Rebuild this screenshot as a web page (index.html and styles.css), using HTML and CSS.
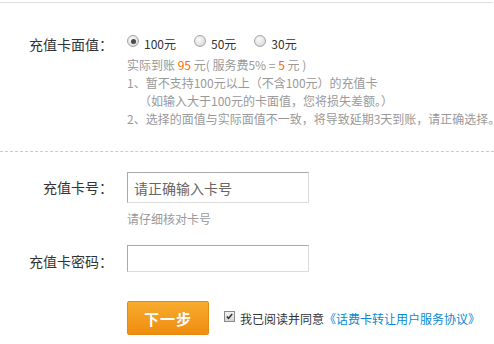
FILE: index.html
```html
<!DOCTYPE html>
<html lang="zh-CN">
<head>
<meta charset="utf-8">
<title>充值卡</title>
<link rel="stylesheet" href="styles.css">
</head>
<body>
<div class="topline"></div>
<section class="amount">
  <div class="row">
    <div class="label">充值卡面值：</div>
    <div class="content">
      <div class="radios">
        <label class="radio-item"><span class="radio checked"></span><span class="radio-text">100元</span></label>
        <label class="radio-item"><span class="radio"></span><span class="radio-text">50元</span></label>
        <label class="radio-item"><span class="radio"></span><span class="radio-text">30元</span></label>
      </div>
      <div class="notes">
        <p>实际到账 <em>95</em> 元( 服务费5% = <em>5</em> 元 )</p>
        <p>1、暂不支持100元以上（不含100元）的充值卡</p>
        <p class="indent">（如输入大于100元的卡面值，您将损失差额。）</p>
        <p>2、选择的面值与实际面值不一致，将导致延期3天到账，请正确选择。</p>
      </div>
    </div>
  </div>
</section>
<div class="dash"></div>
<section class="card">
  <div class="row">
    <div class="label tall">充值卡号：</div>
    <div class="content">
      <input class="field field-num" type="text" placeholder="请正确输入卡号">
      <div class="hint">请仔细核对卡号</div>
    </div>
  </div>
  <div class="row row-pwd">
    <div class="label pwd">充值卡密码：</div>
    <div class="content">
      <input class="field field-pwd" type="password">
    </div>
  </div>
  <div class="row row-submit">
    <div class="label"></div>
    <div class="content submit">
      <button class="btn" type="button">下一步</button>
      <span class="check"><svg width="11" height="11" viewBox="0 0 11 11"><path d="M2.2 5.6 L4.3 7.8 L8.8 2.4" fill="none" stroke="#333" stroke-width="1.8"/></svg></span>
      <span class="agree">我已阅读并同意</span><a class="link" href="#">《话费卡转让用户服务协议》</a>
    </div>
  </div>
</section>
</body>
</html>
```
FILE: styles.css
```css
html, body {
  margin: 0;
  padding: 0;
  background: #fff;
}
body {
  font-family: "Noto Sans CJK SC", "Noto Sans", sans-serif;
  color: #333;
  width: 494px;
  overflow: hidden;
}
.topline {
  margin-top: 2px;
  width: 493px;
  border-top: 1px solid #ddd;
}
.amount {
  padding-top: 31px;
}
.row {
  display: grid;
  grid-template-columns: 113px 1fr;
  column-gap: 14px;
  align-items: start;
}
.label {
  text-align: right;
  font-size: 14px;
  line-height: 20px;
  white-space: nowrap;
  color: #333;
}
.label.tall {
  line-height: 31px;
}
.label.pwd {
  line-height: 32px;
}
.content {
  min-width: 0;
}
.radios {
  display: flex;
  height: 20px;
}
.radio-item {
  display: flex;
  align-items: flex-start;
  margin-right: 18px;
}
.radio {
  box-sizing: border-box;
  width: 12px;
  height: 12px;
  margin-top: 1px;
  border-radius: 50%;
  border: 1px solid #a5a5a5;
  background: radial-gradient(circle at 40% 35%, #fafafa 0%, #e4e4e4 55%, #cfcfcf 100%);
  display: flex;
  align-items: center;
  justify-content: center;
}
.radio.checked::after {
  content: "";
  width: 5px;
  height: 5px;
  border-radius: 50%;
  background: #4a4a4a;
}
.radio-text {
  margin-left: 5px;
  font-size: 12px;
  line-height: 20px;
  color: #333;
  white-space: nowrap;
}
.notes {
  margin-top: 2px;
}
.notes p {
  margin: 0;
  font-size: 12px;
  line-height: 18px;
  color: #999;
  white-space: nowrap;
}
.notes em {
  font-style: normal;
  color: #f60;
}
.notes .indent {
  padding-left: 12px;
}
.dash {
  margin-top: 23px;
  width: 494px;
  border-top: 1px dashed #ccc;
}
.card .row:first-child {
  margin-top: 20px;
}
.field {
  display: block;
  box-sizing: border-box;
  width: 182px;
  margin: 0;
  padding: 0 6px;
  border: 1px solid;
  border-color: #aaa #dcdcdc #dcdcdc #aaa;
  background: #fff;
  font-family: "Noto Sans CJK SC", "Noto Sans", sans-serif;
  font-size: 14px;
  color: #333;
  outline: none;
}
.field::placeholder {
  color: #666;
  opacity: 1;
}
.field-num {
  height: 31px;
}
.field-pwd {
  height: 27px;
}
.hint {
  margin-top: 7px;
  font-size: 12px;
  line-height: 18px;
  color: #999;
}
.row-pwd {
  margin-top: 17px;
}
.row-submit {
  margin-top: 24px;
}
.submit {
  display: flex;
  align-items: center;
  white-space: nowrap;
}
.btn {
  box-sizing: border-box;
  width: 82px;
  height: 34px;
  margin: 0;
  padding: 0;
  border: 1px solid #e48a12;
  border-radius: 2px;
  background: linear-gradient(#f8ab2c, #ef8d10);
  color: #fff;
  font-family: "Noto Sans CJK SC", "Noto Sans", sans-serif;
  font-size: 15px;
  font-weight: bold;
  letter-spacing: 1px;
  cursor: pointer;
}
.check {
  box-sizing: border-box;
  width: 11px;
  height: 11px;
  margin-left: 15px;
  margin-bottom: 3px;
  border: 1px solid #8a8a8a;
  background: linear-gradient(#f2f2f2, #d6d6d6);
  display: flex;
  align-items: center;
  justify-content: center;
}
.check svg {
  display: block;
  width: 9px;
  height: 9px;
}
.agree {
  margin-left: 5px;
  font-size: 12px;
  color: #333;
}
.link {
  font-size: 12px;
  color: #0a88d0;
  text-decoration: none;
}
```
